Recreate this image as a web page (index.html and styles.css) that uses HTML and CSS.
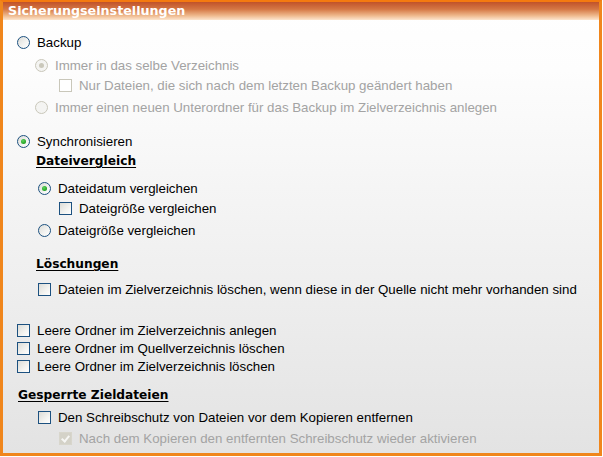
FILE: index.html
```html
<!DOCTYPE html>
<html lang="de">
<head>
<meta charset="utf-8">
<title>Sicherungseinstellungen</title>
<link rel="stylesheet" href="styles.css">
</head>
<body>
<div class="frame">
  <div class="title">Sicherungseinstellungen</div>
  <div class="content">
    <div class="row l0 first"><span class="radio"></span><span class="label">Backup</span></div>
    <div class="row l1b g5 dis"><span class="radio on"></span><span class="label">Immer in das selbe Verzeichnis</span></div>
    <div class="row l2 g2 dis"><span class="check"></span><span class="label">Nur Dateien, die sich nach dem letzten Backup geändert haben</span></div>
    <div class="row l1b g4 dis"><span class="radio"></span><span class="label">Immer einen neuen Unterordner für das Backup im Zielverzeichnis anlegen</span></div>

    <div class="row l0 g16"><span class="radio on"></span><span class="label">Synchronisieren</span></div>
    <div class="row heading l1h g2">Dateivergleich</div>
    <div class="row l1 g9"><span class="radio on"></span><span class="label">Dateidatum vergleichen</span></div>
    <div class="row l2 g2"><span class="check"></span><span class="label">Dateigröße vergleichen</span></div>
    <div class="row l1 g4"><span class="radio"></span><span class="label">Dateigröße vergleichen</span></div>

    <div class="row heading l1h g16">Löschungen</div>
    <div class="row l1 g7"><span class="check"></span><span class="label">Dateien im Zielverzeichnis löschen, wenn diese in der Quelle nicht mehr vorhanden sind</span></div>

    <div class="row l0 g23"><span class="check"></span><span class="label">Leere Ordner im Zielverzeichnis anlegen</span></div>
    <div class="row l0"><span class="check"></span><span class="label">Leere Ordner im Quellverzeichnis löschen</span></div>
    <div class="row l0"><span class="check"></span><span class="label">Leere Ordner im Zielverzeichnis löschen</span></div>

    <div class="row heading l0h g11">Gesperrte Zieldateien</div>
    <div class="row l1 g4"><span class="check"></span><span class="label">Den Schreibschutz von Dateien vor dem Kopieren entfernen</span></div>
    <div class="row l2 g3 dis"><span class="check on"></span><span class="label">Nach dem Kopieren den entfernten Schreibschutz wieder aktivieren</span></div>
  </div>
</div>
</body>
</html>
```
FILE: styles.css
```css
html, body {
  margin: 0;
  padding: 0;
  background: #ffffff;
}
.frame {
  box-sizing: border-box;
  width: 602px;
  height: 456px;
  border: 3px solid #f0861c;
  border-top: 2px solid #f47a10;
  background: linear-gradient(to bottom, #ffffff 0%, #fdfdfd 15%, #e3e3e3 100%);
  display: flex;
  flex-direction: column;
  overflow: hidden;
}
.title {
  height: 18px;
  flex: none;
  background: linear-gradient(to bottom, #c0522a 0%, #d57744 40%, #eeb88c 75%, #fde6cf 100%);
  color: #ffffff;
  font-family: "DejaVu Sans", Verdana, sans-serif;
  font-weight: bold;
  font-size: 12.7px;
  line-height: 17px;
  padding-left: 5px;
}
.content {
  display: flex;
  flex-direction: column;
  font-family: "Liberation Sans", Arial, sans-serif;
  font-size: 13.3px;
  color: #000;
}
.row {
  height: 18px;
  display: flex;
  align-items: center;
  white-space: nowrap;
}
.first { margin-top: 13px; }
.g2 { margin-top: 2px; }
.g3 { margin-top: 3px; }
.g4 { margin-top: 4px; }
.g5 { margin-top: 5px; }
.g7 { margin-top: 7px; }
.g9 { margin-top: 9px; }
.g11 { margin-top: 11px; }
.g16 { margin-top: 16px; }
.g23 { margin-top: 23px; }

.l0 { padding-left: 14px; }
.l1 { padding-left: 35px; }
.l1b { padding-left: 32px; }
.l2 { padding-left: 56px; }
.l0h { padding-left: 15px; }
.l1h { padding-left: 33px; }

.label { margin-left: 7px; }

.heading {
  font-family: "DejaVu Sans", Verdana, sans-serif;
  font-weight: bold;
  font-size: 12.2px;
  text-decoration: underline;
  text-underline-offset: 2px;
}

.radio {
  box-sizing: border-box;
  width: 13px;
  height: 13px;
  border-radius: 50%;
  border: 1px solid #1c5180;
  background: linear-gradient(135deg, #dcdcd7 0%, #f4f4f2 60%, #ffffff 100%);
  position: relative;
  flex: none;
}
.radio.on::after {
  content: "";
  position: absolute;
  left: 3px;
  top: 3px;
  width: 5px;
  height: 5px;
  border-radius: 50%;
  background: radial-gradient(circle at 40% 35%, #5fd35f 0%, #21a121 70%, #1a8a1a 100%);
}
.check {
  box-sizing: border-box;
  width: 13px;
  height: 13px;
  border: 1px solid #1c5180;
  background: linear-gradient(135deg, #dcdcd7 0%, #f3f3f0 60%, #ffffff 100%);
  flex: none;
  position: relative;
}
.dis { color: #a3a3a3; }
.dis .radio {
  border-color: #c9c7ba;
  background: #f4f4f2;
}
.dis .radio.on::after {
  background: #cac8bb;
}
.dis .check {
  border-color: #c9c7ba;
  background: #ffffff;
}
.dis .check.on {
  background: #d4d2c8;
  border-color: #d8d6cc;
}
.dis .check.on::after {
  content: "";
  position: absolute;
  left: 3px;
  top: 1px;
  width: 3px;
  height: 6px;
  border-right: 2px solid #f6f6f4;
  border-bottom: 2px solid #f6f6f4;
  transform: rotate(40deg);
}
```
